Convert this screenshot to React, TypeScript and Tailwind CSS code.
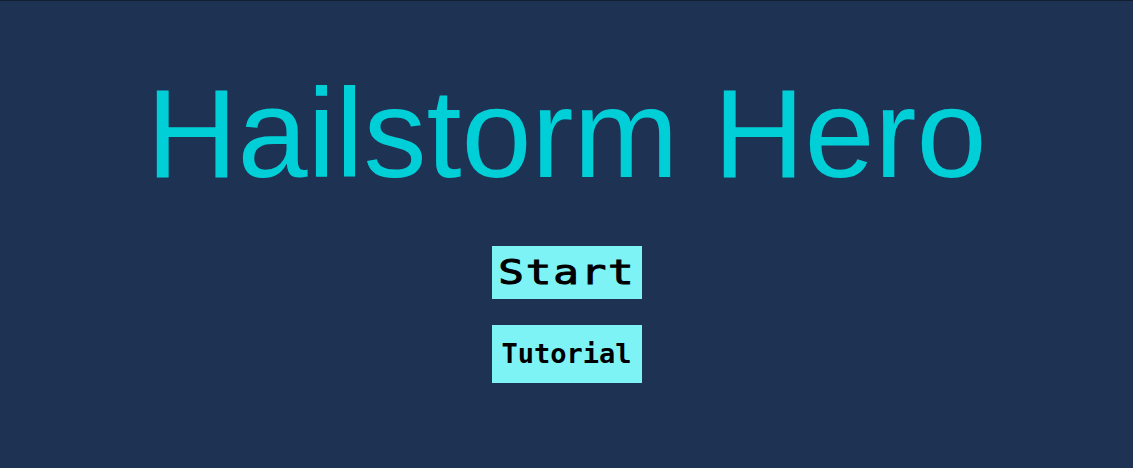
export default function App() {
  return (
    <div className="w-full h-[468px] bg-[#1e3354] border-t border-[#121f33] flex flex-col items-center overflow-hidden">
      <h1 className="mt-[70px] text-[126px] leading-none text-[#00cfd8] font-['Liberation_Sans',Arial,sans-serif]">
        Hailstorm Hero
      </h1>
      <button className="mt-[49px] w-[150px] h-[53px] bg-[#7ef3f6] text-black flex items-center justify-center">
        <span className="inline-block scale-x-125 text-[34px] tracking-[1.5px] font-['DejaVu_Sans_Mono',monospace] [-webkit-text-stroke:1px_black]">
          Start
        </span>
      </button>
      <button className="mt-[26px] w-[150px] h-[58px] bg-[#7ef3f6] text-black text-[27px] font-bold font-['DejaVu_Sans_Mono',monospace] flex items-center justify-center">
        Tutorial
      </button>
    </div>
  );
}
